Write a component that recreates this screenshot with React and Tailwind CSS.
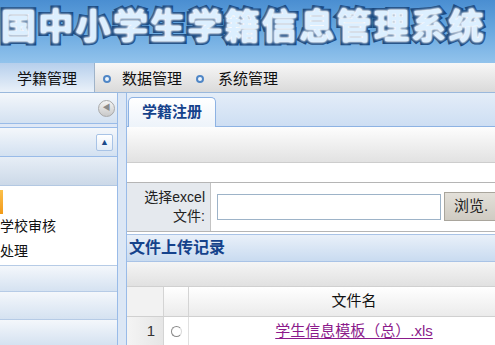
export default function App() {
  const font = { fontFamily: '"Liberation Sans","Noto Sans CJK SC",sans-serif' };
  const Bullet = () => (
    <span className="inline-block w-[8px] h-[8px] rounded-full border-2 border-[#4f86c6] bg-[#eef5fc]" />
  );
  return (
    <div className="w-[495px] h-[345px] overflow-hidden bg-[#dfe8f6] flex flex-col" style={font}>
      {/* header */}
      <header className="h-[63px] shrink-0 overflow-hidden bg-gradient-to-b from-[#4a8ed1] via-[#6aa9e0] to-[#92c3ec] pt-[4px] pl-[1px]">
        <h1
          className="whitespace-nowrap text-[35px] leading-[40px] font-bold tracking-[2.3px] text-[#dcefff] [-webkit-text-stroke:6px_#1a4a82] [paint-order:stroke_fill] [text-shadow:0_0_2px_#ffffff,0_0_3px_#ffffff,0_0_3px_#ffffff]"
          style={{ fontFamily: '"Noto Sans CJK SC",sans-serif' }}
        >
          国中小学生学籍信息管理系统
        </h1>
      </header>

      {/* nav */}
      <nav className="h-[30px] shrink-0 flex items-stretch bg-gradient-to-b from-[#f7f7f7] to-[#dadada] border-b border-[#9ab8dc] text-[15px] text-[#111]">
        <div className="w-[95px] flex items-center justify-center pt-[3px] bg-gradient-to-b from-[#b6cfec] to-[#eaf1f9] border-r border-[#9fb3c9]">
          学籍管理
        </div>
        <div className="flex items-center pt-[3px] pl-[8px]">
          <Bullet />
          <span className="ml-[11px]">数据管理</span>
        </div>
        <div className="flex items-center pt-[3px] pl-[14px]">
          <Bullet />
          <span className="ml-[14px]">系统管理</span>
        </div>
      </nav>

      {/* body */}
      <div className="flex-1 flex min-h-0">
        {/* left sidebar */}
        <aside className="w-[118px] shrink-0 flex flex-col border-r border-[#99bbe8] bg-[#dfe8f6] text-[14px] text-[#111]">
          <div className="h-[31px] shrink-0 flex items-center justify-end pr-[2px] bg-gradient-to-b from-[#f4f7fb] to-[#d3e1f1] border-b border-[#99bbe8]">
            <span className="w-[17px] h-[17px] rounded-full border border-[#a9a9a9] bg-gradient-to-b from-[#f5f5f5] to-[#c9c9c9] flex items-center justify-center text-[8px] leading-none text-[#8a8a8a]">
              ◀
            </span>
          </div>
          <div className="h-[3px] shrink-0" />
          <div className="h-[30px] shrink-0 flex items-center justify-end pr-[4px] bg-gradient-to-b from-[#f4f7fb] to-[#d3e1f1] border-y border-[#99bbe8]">
            <span className="w-[17px] h-[17px] rounded-[2px] border border-[#a8c3e6] bg-gradient-to-b from-[#ffffff] to-[#e3ecf7] flex items-center justify-center text-[9px] leading-none text-[#1d4a8a]">
              ▲
            </span>
          </div>
          <div className="h-[29px] shrink-0 bg-gradient-to-b from-[#e7eef6] to-[#ccd9e8] border-b border-[#b3c8e2]" />
          <div className="h-[79px] shrink-0 bg-white flex flex-col pt-[4px]">
            <div className="h-[24px] shrink-0 flex">
              <span className="w-[3px] h-full bg-gradient-to-b from-[#fbc04a] to-[#f29a14]" />
            </div>
            <div className="h-[24px] shrink-0 flex items-center">学校审核</div>
            <div className="h-[26px] shrink-0 flex items-center">处理</div>
          </div>
          <div className="h-[27px] shrink-0 bg-gradient-to-b from-[#f4f7fb] to-[#d5e2f1] border-y border-[#b6cbe6]" />
          <div className="h-[28px] shrink-0 bg-gradient-to-b from-[#f4f7fb] to-[#d5e2f1] border-b border-[#b6cbe6]" />
          <div className="flex-1 bg-gradient-to-b from-[#f4f7fb] to-[#d5e2f1]" />
        </aside>

        {/* splitter */}
        <div className="w-[8px] shrink-0 bg-[#dce7f5]" />

        {/* right panel */}
        <main className="w-[400px] shrink-0 flex flex-col border-l border-[#99bbe8] bg-white">
          <div className="h-[34px] shrink-0 flex items-end pl-[1px] bg-gradient-to-b from-[#e4edf8] to-[#cddef3] border-b border-[#8db2e3]">
            <div className="w-[88px] h-[30px] -mb-px rounded-t-[5px] border border-b-0 border-[#8db2e3] bg-gradient-to-b from-[#ffffff] to-[#edf3fa] flex items-center justify-center text-[15px] font-bold text-[#15428b]">
              学籍注册
            </div>
          </div>
          <div className="h-[36px] shrink-0 bg-gradient-to-b from-[#fdfdfd] to-[#e2e2e2] border-b border-[#cdcdcd]" />
          <div className="h-[19px] shrink-0 bg-white" />
          <div className="h-[50px] shrink-0 flex border-y border-[#b5b5b5] bg-white">
            <div className="w-[84px] shrink-0 bg-[#e5e9ee] border-r border-[#c3c3c3] flex flex-col justify-center items-end pr-[5px] text-[14px] leading-[19px] text-[#222]">
              <span>选择excel</span>
              <span>文件:</span>
            </div>
            <div className="flex items-start pt-[11px] pl-[6px]">
              <div className="w-[224px] h-[26px] border border-[#9db3c8] bg-white" />
              <div className="ml-[3px] -mt-[2px] w-[70px] h-[29px] border border-[#a9a59c] bg-gradient-to-b from-[#e3e0d9] to-[#cfcbc2] flex items-center pl-[9px] text-[15px] text-[#222]">
                浏览.
              </div>
            </div>
          </div>
          <div className="h-[2px] shrink-0 bg-white" />
          <div className="h-[28px] shrink-0 flex items-center pl-[2px] bg-gradient-to-b from-[#e9f0f9] to-[#c9dbf0] border-y border-[#a9c3e6] text-[16px] font-bold text-[#15428b]">
            文件上传记录
          </div>
          <div className="h-[25px] shrink-0 bg-gradient-to-b from-[#f5f5f5] to-[#e1e1e1] border-b border-[#d0d0d0]" />
          <div className="h-[30px] shrink-0 flex bg-gradient-to-b from-[#ffffff] to-[#ebebeb] border-b border-[#d0d0d0] text-[15px] text-[#111]">
            <div className="w-[37px] shrink-0 bg-[#f2f2f2] border-r border-[#d4d4d4]" />
            <div className="w-[25px] shrink-0 border-r border-[#d4d4d4]" />
            <div className="w-[330px] shrink-0 flex items-center justify-center">文件名</div>
          </div>
          <div className="flex-1 flex text-[15px]">
            <div className="w-[37px] shrink-0 bg-gradient-to-r from-[#f4f4f4] to-[#e6e6e6] border-r border-[#d4d4d4] flex items-center justify-end pr-[8px] text-[#333]">
              1
            </div>
            <div className="w-[25px] shrink-0 flex items-center justify-center border-r border-[#e0e0e0]">
              <span className="w-[11px] h-[11px] rounded-full border-[1.5px] border-[#8a8a8a] border-r-[#d8d8d8]" />
            </div>
            <div className="w-[330px] shrink-0 flex items-center justify-center">
              <span className="text-[#8b1a8b] underline underline-offset-2">学生信息模板（总）.xls</span>
            </div>
          </div>
        </main>
      </div>
    </div>
  );
}
